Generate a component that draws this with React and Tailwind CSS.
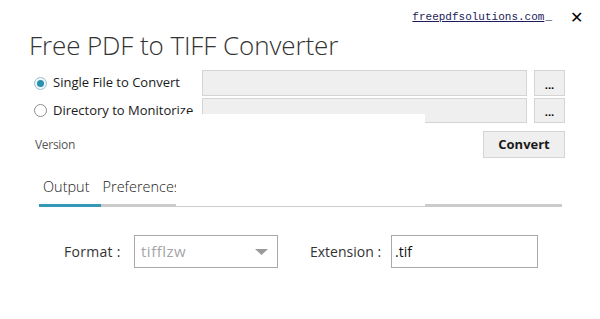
import React from 'react';

function Radio({ checked, label }) {
    return (
        <div className="flex items-center gap-[6px] w-[168px] shrink-0">
            <span className={`w-[13px] h-[13px] rounded-full border flex items-center justify-center ${checked ? 'border-[#9bbfcc] bg-[#eef6f9]' : 'border-[#8f8f8f] bg-white'}`}>
                {checked && <span className="w-[7px] h-[7px] rounded-full bg-[#2b8fae]" />}
            </span>
            <span className="text-[13px] text-[#1a1a1a] whitespace-nowrap">{label}</span>
        </div>
    );
}

export default function App() {
    return (
        <div className="w-[600px] h-[319px] bg-white relative overflow-hidden font-['Open_Sans',sans-serif]">
            <div className="flex justify-end items-center h-[20px] mt-[7px] pr-[17px]">
                <a className="font-['Liberation_Mono',monospace] text-[11px] text-[#1c1c5a] underline">freepdfsolutions.com</a>
                <span className="font-['Liberation_Mono',monospace] text-[11px] text-[#1c1c5a] ml-[1px]">_</span>
                <span className="ml-[18px] text-[16px] leading-none text-black">✕</span>
            </div>

            <div className="pl-[29px] h-[36px] leading-[36px] text-[26px] font-light text-[#333] tracking-[-0.1px]">
                Free PDF to TIFF Converter
            </div>

            <div className="pl-[34px] pr-[35px] mt-[7px] flex flex-col gap-[2px]">
                <div className="flex items-center h-[26px]">
                    <Radio checked label="Single File to Convert" />
                    <div className="flex-1 h-full bg-[#efefef] border border-[#d4d4d4]" />
                    <button className="ml-[7px] w-[31px] h-full bg-[#efefef] border border-[#d4d4d4] text-[11px] font-bold leading-none pt-[2px]">...</button>
                </div>
                <div className="flex items-center h-[25px]">
                    <Radio label="Directory to Monitorize" />
                    <div className="flex-1 h-full bg-[#efefef] border border-[#d4d4d4]" />
                    <button className="ml-[7px] w-[31px] h-full bg-[#efefef] border border-[#d4d4d4] text-[11px] font-bold leading-none pt-[2px]">...</button>
                </div>
            </div>

            <div className="pl-[35px] pr-[35px] mt-[8px] flex items-center justify-between h-[27px]">
                <span className="text-[12px] text-[#555] tracking-[-0.3px]">Version</span>
                <button className="w-[82px] h-full bg-[#efefef] border border-[#d4d4d4] text-[13px] font-bold text-[#1a1a1a]">Convert</button>
            </div>

            <div className="pl-[39px] pr-[38px] mt-[17px]">
                <div className="flex items-center h-[24px] pl-[4px] gap-[13px] text-[14.5px] font-light text-[#222]">
                    <span>Output</span>
                    <span>Preferences</span>
                </div>
                <div className="flex h-[3px] mt-[5px]">
                    <div className="w-[62px] bg-[#3598b8]" />
                    <div className="flex-1 bg-[#cbcbcb]" />
                </div>
            </div>

            <div className="flex items-center mt-[28px] pl-[64px] h-[33px]">
                <span className="text-[14px] text-[#333] w-[70px] tracking-[0.3px]">Format :</span>
                <div className="w-[144px] h-full border border-[#a9a9a9] flex items-center justify-between pl-[6px] pr-[9px]">
                    <span className="text-[15px] text-[#a5a5a5] tracking-[0.5px]">tifflzw</span>
                    <svg width="13" height="6" viewBox="0 0 13 6"><path d="M0 0 L13 0 L6.5 6 Z" fill="#9a9a9a" /></svg>
                </div>
                <span className="text-[14px] text-[#333] ml-[32px] w-[81px]">Extension :</span>
                <div className="w-[147px] h-full border border-[#a9a9a9] flex items-center pl-[3px]">
                    <span className="text-[14px] text-[#111]">.tif</span>
                </div>
            </div>

            <div className="absolute left-[176px] top-[114px] w-[249px] h-[92px] bg-white" />
        </div>
    );
}
